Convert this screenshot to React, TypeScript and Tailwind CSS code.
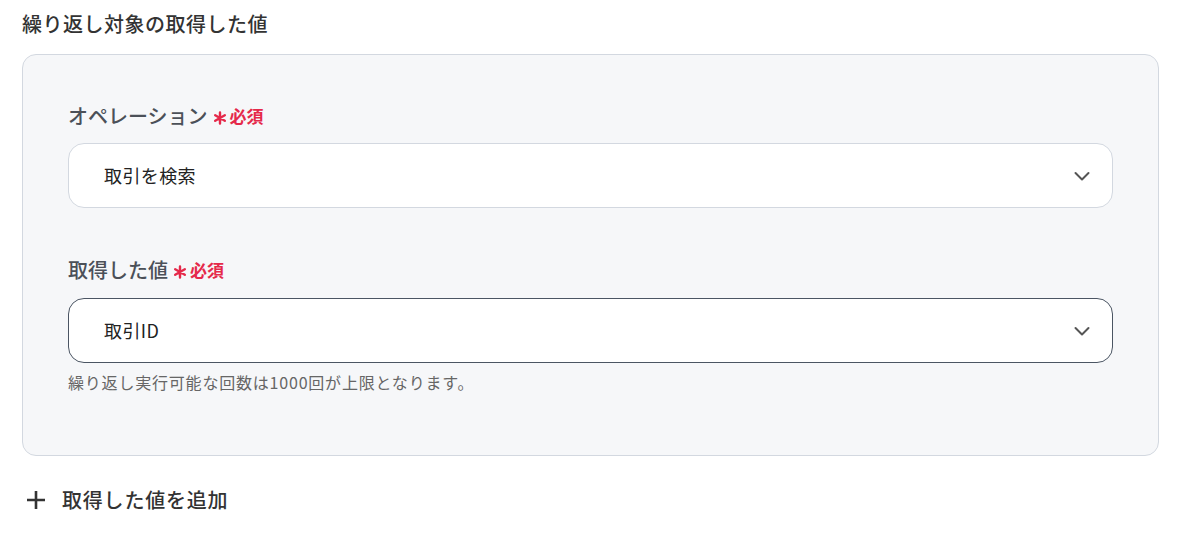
import React from "react";

const Chevron = () => (
  <svg width="20" height="20" viewBox="0 0 20 20" fill="none" stroke="#555" strokeWidth="2" strokeLinecap="round" strokeLinejoin="round">
    <path d="M3.5 7l6.5 6.5L16.5 7" />
  </svg>
);

const Required = () => (
  <span className="flex items-center ml-[5px] text-[#e5294a] text-[17px] font-bold">
    <svg width="14" height="14" viewBox="0 0 14 14" stroke="#e5294a" strokeWidth="2.4" strokeLinecap="round" className="mr-[3px] mt-[3px]">
      <path d="M7 1.5v11M2.2 4.2l9.6 5.6M2.2 9.8l9.6-5.6" />
    </svg>
    <span>必須</span>
  </span>
);

export default function App() {
  return (
    <div className="w-[1193px] h-[533px] bg-white px-[22px] pt-[10px]" style={{ fontFamily: '"Noto Sans CJK JP", "Noto Sans", sans-serif' }}>
      <div className="text-[20px] font-medium text-[#333] tracking-[0.5px] leading-[28px]">繰り返し対象の取得した値</div>
      <div className="mt-[16px] w-[1137px] h-[402px] rounded-[14px] border border-[#d3d8e0] bg-[#f6f7f9] px-[45px] pt-[47px]">
        <div className="flex items-center h-[28px] text-[20px] font-medium text-[#4b5058]">
          オペレーション<Required />
        </div>
        <div className="mt-[13px] h-[65px] rounded-[16px] border border-[#d3d8e0] bg-white flex items-center justify-between pl-[35px] pr-[20px]">
          <span className="text-[18px] text-[#222] tracking-[0.4px]">取引を検索</span>
          <Chevron />
        </div>
        <div className="mt-[48px] flex items-center h-[28px] text-[20px] font-medium text-[#4b5058]">
          取得した値<Required />
        </div>
        <div className="mt-[14px] h-[65px] rounded-[16px] border border-[#4b5563] bg-white flex items-center justify-between pl-[35px] pr-[20px]">
          <span className="text-[18px] text-[#222] tracking-[0.4px]">取引ID</span>
          <Chevron />
        </div>
        <div className="mt-[8px] text-[16px] text-[#666] leading-[22px] tracking-[0.8px]">繰り返し実行可能な回数は1000回が上限となります。</div>
      </div>
      <div className="mt-[30px] flex items-center h-[28px] text-[20px] font-medium text-[#333] tracking-[0.8px]">
        <svg width="18" height="18" viewBox="0 0 18 18" className="ml-[5px] mr-[17px]" stroke="#333" strokeWidth="2.6">
          <path d="M9 0v18M0 9h18" />
        </svg>
        取得した値を追加
      </div>
    </div>
  );
}
